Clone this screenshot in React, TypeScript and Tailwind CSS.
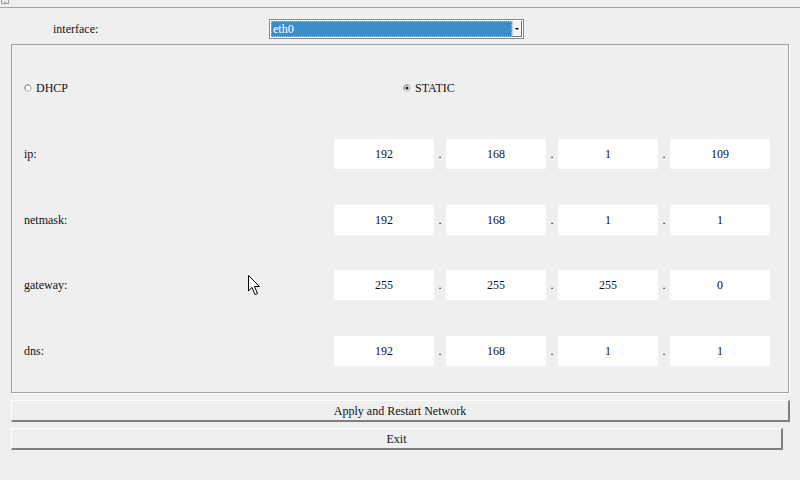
import React from "react";

const rows = [
  { label: "ip:", values: ["192", "168", "1", "109"] },
  { label: "netmask:", values: ["192", "168", "1", "1"] },
  { label: "gateway:", values: ["255", "255", "255", "0"] },
  { label: "dns:", values: ["192", "168", "1", "1"] },
];

const rowGaps = ["mt-[41px]", "mt-[36px]", "mt-[35px]", "mt-[36px]"];

function Radio({ checked }: { checked?: boolean }) {
  return (
    <svg width="8" height="8" viewBox="0 0 8 8" className="mr-[4px]">
      <circle cx="4" cy="4" r="3.2" fill="#ffffff" stroke="#b0b0b0" strokeWidth="1" />
      <path d="M1.2 5.5 A3.2 3.2 0 0 1 5.5 1.2" fill="none" stroke="#808080" strokeWidth="1" />
      {checked && <circle cx="4" cy="4" r="1.6" fill="#111" />}
    </svg>
  );
}

export default function App() {
  return (
    <div
      className="relative w-[800px] h-[480px] bg-[#efefef] text-[12px] text-[#111] overflow-hidden"
      style={{ fontFamily: '"Liberation Serif", serif' }}
    >
      {/* title strip */}
      <div className="h-[8px] border-b border-[#a3a3a3] flex items-start pl-[1px]">
        <svg width="8" height="4" viewBox="0 0 8 4">
          <path d="M0.5 0 V3.5 H7.5 V0 M4 1 V3.5" fill="none" stroke="#9a9a9a" strokeWidth="1" />
        </svg>
      </div>

      {/* interface row */}
      <div className="h-[36px] pt-[6px] flex items-center">
        <span className="ml-[53px] w-[216px]">interface:</span>
        <div className="w-[255px] h-[20px] border border-[#8a8a8a] bg-white flex items-stretch p-px">
          <div className="flex-1 bg-[#3b8dc8] border border-dotted border-[#9cc4e4] text-white leading-[15px] pl-[1px]">
            eth0
          </div>
          <div className="w-[10px] bg-[#f4f4f4] border-l border-[#d0d0d0] border-r border-r-[#707070] border-b border-b-[#707070] flex items-center justify-center">
            <div className="w-0 h-0 border-l-[2px] border-r-[2px] border-t-[2px] border-l-transparent border-r-transparent border-t-black" />
          </div>
        </div>
      </div>

      {/* frame */}
      <div className="ml-[11px] w-[778px] h-[349px] border border-[#a0a0a0] shadow-[1px_1px_0_#ffffff] flex flex-col">
        <div className="mt-[33px] h-[20px] flex items-center">
          <div className="ml-[12px] w-[379px] flex items-center">
            <Radio />
            <span>DHCP</span>
          </div>
          <div className="flex items-center">
            <Radio checked />
            <span>STATIC</span>
          </div>
        </div>
        {rows.map((r, i) => (
          <div key={r.label} className={`${rowGaps[i]} h-[30px] flex items-center`}>
            <span className="ml-[12px] w-[310px]">{r.label}</span>
            <div className="flex items-center">
              {r.values.map((v, j) => (
                <React.Fragment key={j}>
                  {j > 0 && <span className="w-[12px] text-center">.</span>}
                  <div className="w-[100px] h-[30px] bg-white flex items-center justify-center">{v}</div>
                </React.Fragment>
              ))}
            </div>
          </div>
        ))}
      </div>

      {/* buttons */}
      <div className="mt-[7px] ml-[11px] w-[779px] h-[22px] bg-[#efefef] border-t border-l border-white border-b-2 border-r-2 border-b-[#808080] border-r-[#808080] flex items-center justify-center">
        Apply and Restart Network
      </div>
      <div className="mt-[6px] ml-[11px] w-[772px] h-[22px] bg-[#efefef] border-t border-l border-white border-b-2 border-r-2 border-b-[#808080] border-r-[#808080] flex items-center justify-center">
        Exit
      </div>

      {/* mouse pointer */}
      <svg className="absolute left-[248px] top-[275px]" width="14" height="21" viewBox="0 0 14 21">
        <path d="M0.5 0.5 V16 L4 12.5 L7 19.5 L9.5 18.5 L6.5 11.5 H11.5 Z" fill="#ffffff" stroke="#000" strokeWidth="1" />
      </svg>
    </div>
  );
}
